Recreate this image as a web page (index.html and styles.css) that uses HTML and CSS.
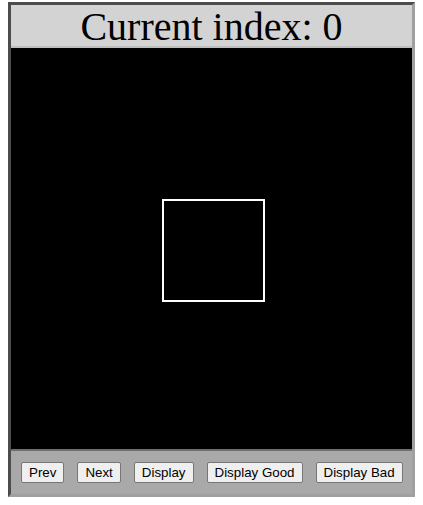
FILE: index.html
```html
<!DOCTYPE html>
<html>
<head>
<meta charset="utf-8">
<link rel="stylesheet" href="styles.css">
</head>
<body>
<div class="frame">
  <div class="header">Current index: 0</div>
  <div class="canvas">
    <svg width="401" height="401" viewBox="0 0 401 401">
      <rect x="152" y="152" width="101" height="101" fill="none" stroke="#fff" stroke-width="2"/>
    </svg>
  </div>
  <div class="toolbar">
    <button>Prev</button>
    <button>Next</button>
    <button>Display</button>
    <button>Display Good</button>
    <button>Display Bad</button>
  </div>
</div>
</body>
</html>
```
FILE: styles.css
```css
body {
  margin: 2px 8px;
  font-family: "Liberation Serif", serif;
}
.frame {
  width: 401px;
  border: 3px inset #a0a0a0;
  background: #a9a9a9;
}
.header {
  background: #d3d3d3;
  height: 41px;
  border-bottom: 2px solid #bdbdbd;
  text-align: center;
  font-size: 40px;
  line-height: 44px;
  color: #000;
}
.canvas {
  height: 401px;
  background: #000;
}
.canvas svg { display: block; }
.toolbar {
  border-top: 2px solid #6e6e6e;
  height: 43px;
  display: flex;
  align-items: center;
  padding: 0 10px;
  gap: 13px;
}
.toolbar button {
  flex-shrink: 0;
  white-space: nowrap;
  font-family: "Liberation Sans", Arial, sans-serif;
  font-size: 13.333px;
  background: #efefef;
  border: 1px solid #767676;
  border-radius: 2px;
  padding: 2px 7px;
  color: #000;
}
```
